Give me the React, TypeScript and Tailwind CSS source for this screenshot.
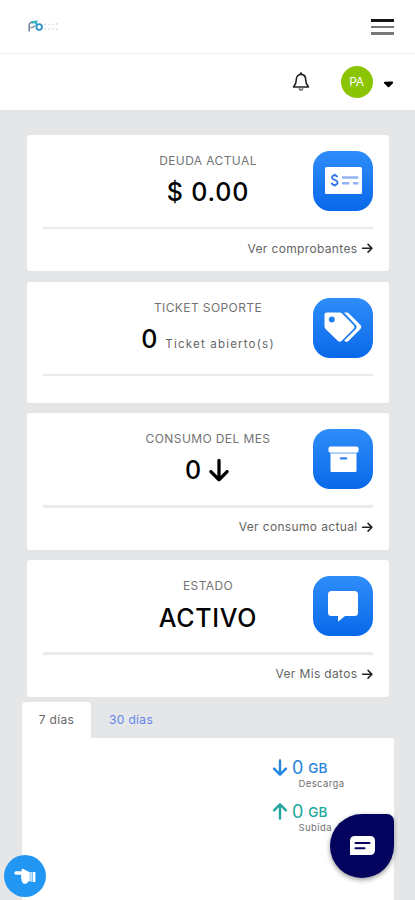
import React from "react";
import { FaArrowDown, FaArrowRight, FaArrowUp, FaCaretDown } from "react-icons/fa6";

type StatCardProps = {
  title: string;
  icon: React.ReactNode;
  link?: string;
  className: string;
  children: React.ReactNode;
};

const Logo = () => (
  <svg width="32" height="14" viewBox="0 0 32 14" fill="none">
    <path d="M1.2 11.5V5.6C1.2 2.8 3 1.8 6 1.7" stroke="#71869a" strokeWidth="1.6" />
    <path d="M2.5 7.5Q5.8 7.8 6.8 5.4" stroke="#7e90a0" strokeWidth="1.4" />
    <path d="M3.5 2.6L8.3 1.7L7.8 4.6" stroke="#35b6bd" strokeWidth="2.2" />
    <circle cx="11.2" cy="7" r="2.8" stroke="#2d92c8" strokeWidth="1.8" />
    <path d="M16 4.4H18M20.5 4.4H22.5M24.5 4.4H26M28 4H30" stroke="#d5dade" strokeWidth="1.4" />
    <path d="M16.5 9.2H18M20 9.2H22M24 9.2H26M28 9.2H30" stroke="#dde0e3" strokeWidth="1.3" />
  </svg>
);

const BellIcon = () => (
  <svg width="18" height="20" viewBox="0 0 18 20" fill="none" stroke="#222" strokeWidth="1.6" strokeLinejoin="round">
    <path d="M9 2.4C5.9 2.4 4.3 4.7 4.3 7.7C4.3 11.4 3.3 13 1.5 15H16.5C14.7 13 13.7 11.4 13.7 7.7C13.7 4.7 12.1 2.4 9 2.4Z" />
    <path d="M9 0.6V2.4" strokeWidth="2" />
    <path d="M7.4 15.8C7.4 19 10.6 19 10.6 15.8" stroke="#777" />
  </svg>
);

const CheckIcon = () => (
  <svg width="37" height="27" viewBox="0 0 37 27" fill="none">
    <rect width="37" height="27" rx="1.5" fill="#fff" />
    <path d="M12.4 10.2C12.1 8.9 11 8.4 9.7 8.4C8 8.4 7 9.2 7 10.5C7 13.6 12.6 12.1 12.6 15.6C12.6 17 11.4 17.9 9.8 17.9C8.1 17.9 6.9 17.1 6.6 15.7M9.7 6.8V8.4M9.7 17.9V19.4" stroke="#2f74e8" strokeWidth="1.7" />
    <path d="M17 10.5H33.3M17 16.2H24.3M28 16.2H33.3" stroke="#91b4f4" strokeWidth="2.5" />
  </svg>
);

const TagsIcon = () => (
  <svg width="38" height="31" viewBox="0 0 38 31" fill="#fff">
    <path
      fillRule="evenodd"
      d="M2.8 0.5H15.5Q17 0.5 18.2 1.7L29.5 13Q31.4 15 29.5 17L17.6 29Q15.8 30.6 14 29L1.8 17.2Q0.5 15.9 0.5 14.2V2.8Q0.5 0.5 2.8 0.5ZM7.8 4.6A3 3 0 1 0 7.8 10.6A3 3 0 1 0 7.8 4.6Z"
    />
    <path d="M20 0.5H22.4Q24 0.5 25.2 1.7L36.4 13Q38.2 15 36.4 17L24.4 29Q22.5 30.7 20.6 29L20.3 28.6L31.4 17.4Q33.8 15 31.4 12.4Z" />
  </svg>
);

const ArchiveIcon = () => (
  <svg width="31" height="27" viewBox="0 0 31 27">
    <rect x="0.5" y="0.5" width="30" height="6.3" rx="2" fill="#fff" />
    <path d="M2.5 6.5H28.5V8H2.5Z" fill="#a9ccfb" />
    <path d="M2.5 8H28.5V25A1 1 0 0 1 27.5 26H3.5A1 1 0 0 1 2.5 25Z" fill="#fff" />
    <rect x="11.8" y="11.2" width="7.5" height="2.2" rx="1" fill="#3781ed" />
  </svg>
);

const BubbleIcon = () => (
  <svg width="30" height="31" viewBox="0 0 30 31" fill="#fff">
    <path d="M3.5 0H26.5Q30 0 30 3.5V21.5Q30 25 26.5 25H17L10 30.8V25H3.5Q0 25 0 21.5V3.5Q0 0 3.5 0Z" />
  </svg>
);

const HandIcon = () => (
  <svg width="22" height="17" viewBox="0 0 22 17" fill="#fff">
    <path d="M2 3.3H8.2L7.7 2.6C7 1.3 8.2 0.2 9.4 0.9L13.6 3.3Q14.6 4 15.8 4V13.2Q14.6 13.2 13.6 14.4Q12.5 16.2 10 15.8Q8 15.4 8.2 13.5Q7 12.5 7.5 11Q6.4 9.7 7.2 8.2V6.8H2Q0.4 6.8 0.4 5T2 3.3Z" />
    <rect x="16.2" y="4" width="1.8" height="9.6" fillOpacity="0.75" />
    <rect x="18.6" y="4" width="2.8" height="10" rx="0.6" />
  </svg>
);

const StatCard = ({ title, icon, link, className, children }: StatCardProps) => {
  return (
    <section className={`flex flex-col rounded-[3px] bg-white px-4 pt-4 ${className}`}>
      <div className="grid h-[76px] shrink-0 grid-cols-[60px_1fr_60px]">
        <span />
        <div className="flex flex-col items-center whitespace-nowrap">
          <h2 className="mt-px text-[12px] leading-[18px] tracking-[0.4px] text-[#737373]">{title}</h2>
          {children}
        </div>
        <div className="flex size-[60px] items-center justify-center rounded-[17px] bg-linear-to-b from-[#2e8df9] to-[#0768e9]">
          {icon}
        </div>
      </div>
      <hr className="h-[2.5px] shrink-0 border-0 bg-[#e9ebec]" />
      {link && (
        <a className="mt-[10.5px] flex items-center justify-end text-[12px] leading-[18px] tracking-[0.35px] text-[#656565]">
          {link}
          <FaArrowRight className="ml-[3px] size-[12.5px] text-[#222]" />
        </a>
      )}
    </section>
  );
};

export default function App() {
  return (
    <div className="relative flex h-[900px] w-[415px] flex-col overflow-hidden bg-[#e4e6e8] font-['Inter',sans-serif]">
      <header className="flex h-[54px] shrink-0 items-center justify-between border-b border-[#eeeeee] bg-white pr-[21px] pl-[28px]">
        <Logo />
        <div className="flex flex-col gap-[4px] pt-px">
          <span className="h-[2.5px] w-[23px] bg-[#151515]" />
          <span className="h-[2.5px] w-[23px] bg-[#777]" />
          <span className="h-[2.5px] w-[23px] bg-[#777]" />
        </div>
      </header>

      <nav className="flex h-[56px] shrink-0 items-center justify-end bg-white pr-[20.5px]">
        <BellIcon />
        <div className="ml-[31px] flex size-8 items-center justify-center rounded-full bg-[#8bc400] text-[12px] tracking-[-0.4px] text-white">
          PA
        </div>
        <FaCaretDown className="mt-[3px] ml-[9px] h-[15px] w-[13px] text-black" />
      </nav>

      <main className="flex flex-col pt-[24.5px]">
        <div className="flex flex-col gap-[10.5px] pr-[26px] pl-[27px]">
          <StatCard title="DEUDA ACTUAL" icon={<CheckIcon />} link="Ver comprobantes" className="h-[136.5px]">
            <p className="mt-[6px] text-[25px] leading-8 font-medium tracking-[0.8px] text-black">$ 0.00</p>
          </StatCard>
          <StatCard title="TICKET SOPORTE" icon={<TagsIcon />} className="h-[121px]">
            <p className="mt-[6px] flex items-baseline text-[25px] leading-8 font-medium text-black">
              0
              <span className="ml-[8px] text-[11.5px] font-normal tracking-[1.2px] text-[#666]">Ticket abierto(s)</span>
            </p>
          </StatCard>
          <StatCard title="CONSUMO DEL MES" icon={<ArchiveIcon />} link="Ver consumo actual" className="h-[136.5px]">
            <p className="mt-[6px] flex items-center text-[25px] leading-8 font-medium text-black">
              0 <FaArrowDown className="ml-[6px] h-[26px] w-[24px]" />
            </p>
          </StatCard>
          <StatCard title="ESTADO" icon={<BubbleIcon />} link="Ver Mis datos" className="h-[136.5px]">
            <p className="mt-[7px] text-[25px] leading-8 font-medium tracking-[0.7px] text-black">ACTIVO</p>
          </StatCard>
        </div>

        <div className="mt-[5px] pr-[21px] pl-[22px]">
          <div className="flex h-[36.5px] items-center text-[12px] tracking-[0.35px]">
            <span className="flex h-full w-[69px] items-center justify-center rounded-t-[4px] bg-white text-[#666]">7 días</span>
            <span className="ml-[18px] text-[#6685ef]">30 días</span>
          </div>
          <div className="flex h-[170px] flex-col items-start rounded-tr-[3px] bg-white pt-[18px] pl-[249px]">
            <div className="flex h-[22px] items-center text-[18px] text-[#2584dc]">
              <FaArrowDown className="h-[19px] w-[18px]" />
              <span className="ml-[3px]">0</span>
              <span className="ml-[5px] pt-[2px] text-[13.5px] font-medium">GB</span>
            </div>
            <span className="ml-[27.5px] text-[9.5px] leading-[12px] tracking-[0.4px] text-[#707070]">Descarga</span>
            <div className="mt-[10px] flex h-[22px] items-center text-[18px] text-[#20a69a]">
              <FaArrowUp className="h-[19px] w-[18px]" />
              <span className="ml-[3px]">0</span>
              <span className="ml-[5px] pt-[2px] text-[13.5px] font-medium">GB</span>
            </div>
            <span className="ml-[27.5px] text-[9.5px] leading-[12px] tracking-[0.4px] text-[#707070]">Subida</span>
          </div>
        </div>
      </main>

      {/* floating buttons */}
      <button className="absolute bottom-[3px] left-[4px] flex size-[42px] items-center justify-center rounded-full bg-[#2196f3]">
        <HandIcon />
      </button>
      <button className="absolute right-[21px] bottom-[22px] flex size-[64px] items-center justify-center rounded-[32px_7px_32px_32px] bg-[#04045f] shadow-[0_2px_5px_rgba(0,0,0,0.4)]">
        <svg width="25" height="20" viewBox="0 0 25 20">
          <path d="M5 0H20Q25 0 25 5V14Q25 19 20 19H0V5Q0 0 5 0Z" fill="#fff" />
          <path d="M5.5 7H19.5M5.5 12.3H14.5" stroke="#04045f" strokeWidth="2" strokeLinecap="round" />
        </svg>
      </button>
    </div>
  );
}
